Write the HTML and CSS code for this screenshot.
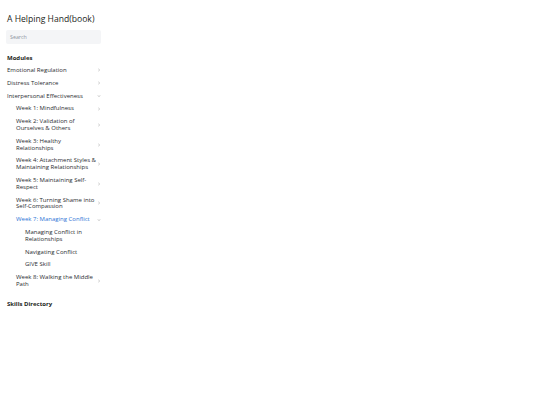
FILE: index.html
```html
<!DOCTYPE html>
<html>
<head>
<meta charset="utf-8">
<link rel="stylesheet" href="styles.css">
</head>
<body>
<aside class="sidebar">
  <h1 class="title">A Helping Hand(book)</h1>
  <div class="search">Search</div>
  <div class="section">Modules</div>
  <ul class="nav">
    <li class="item"><span class="label">Emotional Regulation</span><svg class="chev" viewBox="0 0 4 6"><path d="M1.4 1.9 L2.6 3 L1.4 4.1"/></svg></li>
    <li class="item"><span class="label">Distress Tolerance</span><svg class="chev" viewBox="0 0 4 6"><path d="M1.4 1.9 L2.6 3 L1.4 4.1"/></svg></li>
    <li class="item"><span class="label">Interpersonal Effectiveness</span><svg class="chev" viewBox="0 0 4 6"><path d="M0.9 2.4 L2 3.6 L3.1 2.4"/></svg></li>
    <li>
      <ul class="nav sub">
        <li class="item"><span class="label">Week 1: Mindfulness</span><svg class="chev" viewBox="0 0 4 6"><path d="M1.4 1.9 L2.6 3 L1.4 4.1"/></svg></li>
        <li class="item"><span class="label">Week 2: Validation of Ourselves &amp; Others</span><svg class="chev" viewBox="0 0 4 6"><path d="M1.4 1.9 L2.6 3 L1.4 4.1"/></svg></li>
        <li class="item"><span class="label">Week 3: Healthy Relationships</span><svg class="chev" viewBox="0 0 4 6"><path d="M1.4 1.9 L2.6 3 L1.4 4.1"/></svg></li>
        <li class="item"><span class="label">Week 4: Attachment Styles &amp; Maintaining Relationships</span><svg class="chev" viewBox="0 0 4 6"><path d="M1.4 1.9 L2.6 3 L1.4 4.1"/></svg></li>
        <li class="item"><span class="label">Week 5: Maintaining Self-Respect</span><svg class="chev" viewBox="0 0 4 6"><path d="M1.4 1.9 L2.6 3 L1.4 4.1"/></svg></li>
        <li class="item"><span class="label">Week 6: Turning Shame into Self-Compassion</span><svg class="chev" viewBox="0 0 4 6"><path d="M1.4 1.9 L2.6 3 L1.4 4.1"/></svg></li>
        <li class="item active"><span class="label">Week 7: Managing Conflict</span><svg class="chev" viewBox="0 0 4 6"><path d="M0.9 2.4 L2 3.6 L3.1 2.4"/></svg></li>
        <li>
          <ul class="nav sub">
            <li class="item"><span class="label">Managing Conflict in Relationships</span></li>
            <li class="item"><span class="label">Navigating Conflict</span></li>
            <li class="item"><span class="label">GIVE Skill</span></li>
          </ul>
        </li>
        <li class="item"><span class="label">Week 8: Walking the Middle Path</span><svg class="chev" viewBox="0 0 4 6"><path d="M1.4 1.9 L2.6 3 L1.4 4.1"/></svg></li>
      </ul>
    </li>
  </ul>
  <div class="section bottom">Skills Directory</div>
</aside>
</body>
</html>
```
FILE: styles.css
```css
html, body {
  margin: 0;
  padding: 0;
  background: #ffffff;
}
body {
  font-family: "Open Sans", "Noto Sans", sans-serif;
  color: #2a2c30;
}
.sidebar {
  width: 95px;
  padding: 12px 0 0 6px;
}
.title {
  margin: 0 0 0 1px;
  font-size: 8.6px;
  font-weight: 400;
  line-height: 14px;
  color: #1c1e21;
}
.search {
  margin-top: 4px;
  height: 14px;
  line-height: 14px;
  background: #f4f5f7;
  border-radius: 2px;
  font-size: 5.3px;
  color: #8d949e;
  padding-left: 4px;
}
.section {
  margin-top: 10px;
  margin-bottom: 2px;
  padding-left: 1px;
  font-size: 6px;
  font-weight: 700;
  line-height: 8px;
  color: #1c1e21;
}
.section.bottom {
  margin-top: 9px;
}
.nav {
  list-style: none;
  margin: 0;
  padding: 0;
}
.sub {
  padding-left: 9px;
}
.item {
  display: flex;
  align-items: center;
  justify-content: space-between;
  padding: 3px 0 3px 1px;
  font-size: 6px;
  line-height: 6.8px;
}
.label {
  flex: 1;
  min-width: 0;
}
.item.active {
  color: #2e75d6;
}
.chev {
  flex: none;
  width: 4px;
  height: 6px;
  margin-left: 1px;
  fill: none;
  stroke: #888;
  stroke-width: 0.5;
}
```
